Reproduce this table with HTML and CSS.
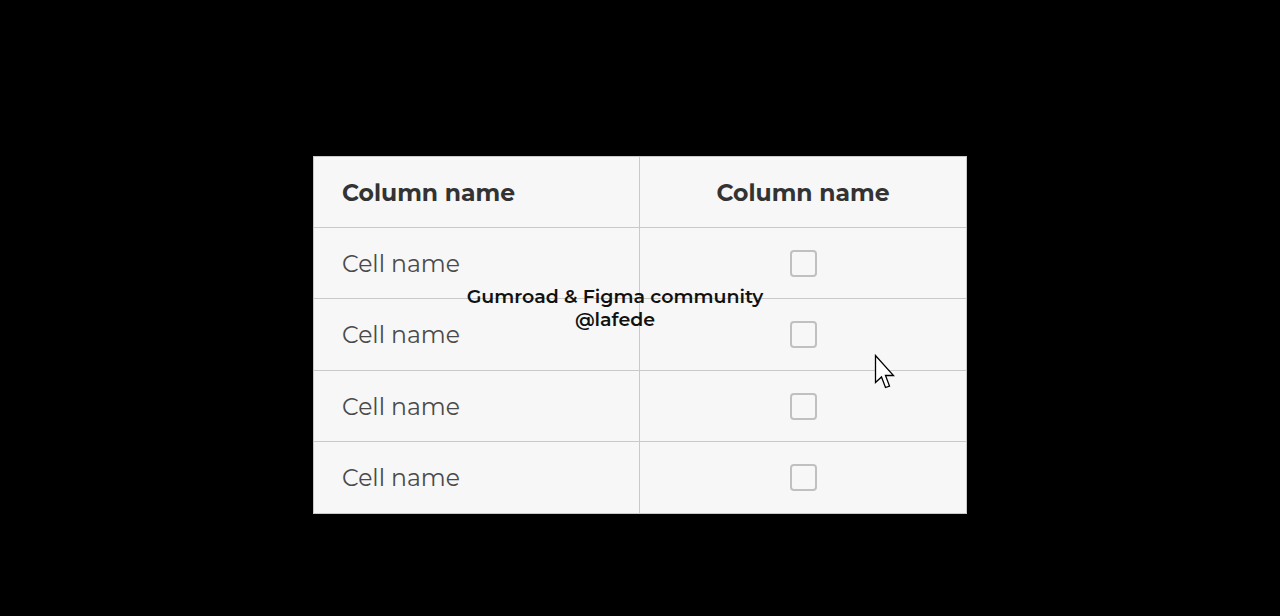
FILE: index.html
```html
<!DOCTYPE html>
<html>
<head>
<meta charset="utf-8">
<link rel="stylesheet" href="styles.css">
</head>
<body>
<div class="stage">
  <div class="table">
    <div class="cell head left">Column name</div>
    <div class="cell head center">Column name</div>
    <div class="cell left">Cell name</div>
    <div class="cell center"><span class="box"></span></div>
    <div class="cell left">Cell name</div>
    <div class="cell center"><span class="box"></span></div>
    <div class="cell left">Cell name</div>
    <div class="cell center"><span class="box"></span></div>
    <div class="cell left">Cell name</div>
    <div class="cell center"><span class="box"></span></div>
    <div class="watermark">Gumroad &amp; Figma community<br>@lafede</div>
    <svg class="cursor" width="24" height="38" viewBox="0 0 24 38">
      <path d="M1.5 1.5 L1.5 28.5 L7.5 23 L11.5 33.5 L15.5 32 L11.5 21.5 L19.5 21.5 Z" fill="#fff" stroke="#000" stroke-width="1.3" stroke-linejoin="miter"/>
    </svg>
  </div>
</div>
</body>
</html>
```
FILE: styles.css
```css
html, body {
  margin: 0;
  padding: 0;
  background: #000;
}
.stage {
  width: 1280px;
  height: 616px;
  box-sizing: border-box;
  padding-top: 156px;
  padding-left: 313px;
}
.table {
  position: relative;
  display: grid;
  grid-template-columns: 325px 326px;
  grid-template-rows: 70px 70px 71px 70px 71px;
  gap: 1px;
  padding: 1px;
  width: max-content;
  background: #c9c9c9;
  font-family: "Montserrat", "Open Sans", "Noto Sans", sans-serif;
}
.cell {
  background: #f7f7f7;
  display: flex;
  align-items: center;
  font-size: 23.5px;
  color: #4a4a4a;
}
.cell.left {
  padding-left: 28px;
}
.cell.center {
  justify-content: center;
}
.cell.head {
  font-weight: 700;
  color: #333;
}
.box {
  width: 23px;
  height: 23px;
  border: 2.5px solid #c0c0c0;
  border-radius: 4px;
  box-sizing: content-box;
}
.watermark {
  position: absolute;
  left: 102px;
  top: 129px;
  width: 400px;
  text-align: center;
  font-family: "Montserrat", "Open Sans", sans-serif;
  font-weight: 600;
  font-size: 19px;
  line-height: 23px;
  color: #111;
}
.cursor {
  position: absolute;
  left: 561px;
  top: 198px;
}
```
